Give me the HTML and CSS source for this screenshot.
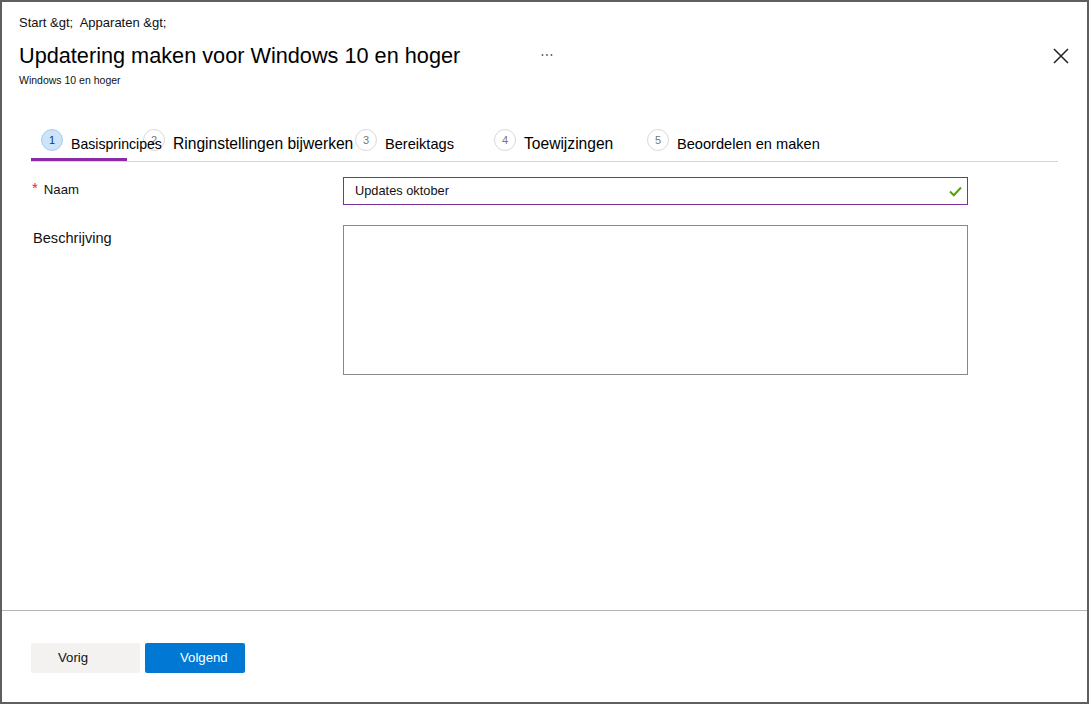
FILE: index.html
```html
<!DOCTYPE html>
<html lang="nl">
<head>
<meta charset="utf-8">
<title>Updatering maken voor Windows 10 en hoger</title>
<link rel="stylesheet" href="styles.css">
</head>
<body>
<div class="frame">
  <div class="content">
    <header class="header">
      <div class="breadcrumb">Start &amp;gt;&nbsp; Apparaten &amp;gt;</div>
      <div class="title-row">
        <h1 class="title">Updatering maken voor Windows 10 en hoger</h1>
        <svg class="more" width="12" height="4" viewBox="0 0 12 4" aria-label="Meer"><circle cx="1.5" cy="2" r="0.9" fill="#555"/><circle cx="6" cy="2" r="0.9" fill="#555"/><circle cx="10.5" cy="2" r="0.9" fill="#555"/></svg>
        <div class="spacer"></div>
        <svg class="close" width="16" height="16" viewBox="0 0 16 16" aria-label="Sluiten"><path d="M1 1 L15 15 M15 1 L1 15" stroke="#222" stroke-width="1.5" fill="none"/></svg>
      </div>
      <div class="subtitle">Windows 10 en hoger</div>
    </header>

    <nav class="tabs">
      <div class="tab tab-1 active"><span class="num">1</span><span class="label l-sm">Basisprincipes</span></div>
      <div class="tab tab-2"><span class="num">2</span><span class="label l-lg">Ringinstellingen bijwerken</span></div>
      <div class="tab tab-3"><span class="num">3</span><span class="label l-md">Bereiktags</span></div>
      <div class="tab tab-4"><span class="num">4</span><span class="label l-lg">Toewijzingen</span></div>
      <div class="tab tab-5"><span class="num">5</span><span class="label l-md">Beoordelen en maken</span></div>
    </nav>

    <form class="form">
      <div class="row">
        <label class="field-label"><span class="req">*</span>Naam</label>
        <div class="input">
          <span class="input-text">Updates oktober</span>
          <svg class="check" width="13" height="11" viewBox="0 0 13 11"><path d="M1 5.5 L4.8 9.3 L12 1.5" stroke="#57a300" stroke-width="2" fill="none"/></svg>
        </div>
      </div>
      <div class="row">
        <label class="field-label desc-label">Beschrijving</label>
        <div class="textarea"></div>
      </div>
    </form>
  </div>

  <footer class="footer">
    <button class="btn btn-prev" type="button">Vorig</button>
    <button class="btn btn-next" type="button">Volgend</button>
  </footer>
</div>
</body>
</html>
```
FILE: styles.css
```css
html, body {
  margin: 0;
  padding: 0;
  background: #ffffff;
}

body {
  font-family: "Liberation Sans", Arial, sans-serif;
  color: #000;
}

.frame {
  width: 1089px;
  height: 704px;
  box-sizing: border-box;
  border: 2px solid #5f5f5f;
  display: flex;
  flex-direction: column;
  background: #fff;
}

.content {
  flex: 1;
}

.header {
  padding: 13px 18px 0 17px;
}

.breadcrumb {
  font-size: 13px;
  line-height: 16px;
  color: #111;
}

.title-row {
  display: flex;
  align-items: center;
  margin-top: 11px;
  height: 28px;
}

.title {
  margin: 0;
  flex: 0 0 522px;
  font-size: 21.7px;
  line-height: 28px;
  font-weight: normal;
  color: #000;
  white-space: nowrap;
}

.more {
  display: block;
  margin-top: -2px;
}

.spacer {
  flex: 1;
}

.close {
  display: block;
  margin-top: -1px;
}

.subtitle {
  margin-top: 3px;
  font-size: 10.5px;
  line-height: 14px;
  color: #111;
}

.tabs {
  position: relative;
  display: flex;
  align-items: flex-start;
  margin: 34px 29px 0 29px;
  padding: 8px 0 10px 10px;
  border-bottom: 1px solid #d6d6d6;
}

.tabs::after {
  content: "";
  position: absolute;
  left: 0;
  bottom: 0;
  width: 96px;
  height: 3px;
  background: #8a2ba6;
}

.tab {
  display: flex;
  align-items: flex-start;
  gap: 8px;
  white-space: nowrap;
  height: 22px;
  min-width: 0;
  overflow: visible;
}

.tab-1 { flex: 0 0 102px; width: 102px; }
.tab-2 { flex: 0 0 212px; width: 212px; }
.tab-3 { flex: 0 0 139px; width: 139px; }
.tab-4 { flex: 0 0 153px; width: 153px; }
.tab-5 { flex: 0 0 auto; }

.num {
  flex: 0 0 auto;
  box-sizing: border-box;
  width: 22px;
  height: 22px;
  border-radius: 50%;
  border: 1px solid #dadada;
  background: #fff;
  color: #777;
  font-size: 11px;
  line-height: 20px;
  text-align: center;
}

.tab.active .num {
  background: #cde3f8;
  border-color: #a9cdef;
  color: #0b3d6e;
}

.label {
  flex: 0 0 auto;
  margin-top: 6px;
  line-height: 18px;
  color: #000;
  position: relative;
}

.l-sm { font-size: 14.1px; }
.l-md { font-size: 14.6px; }
.l-lg { font-size: 15.6px; }

.tab-1 .label { z-index: 1; }

.form {
  margin: 15px 0 0 29px;
  display: flex;
  flex-direction: column;
  gap: 20px;
}

.row {
  display: flex;
  align-items: flex-start;
}

.field-label {
  box-sizing: border-box;
  flex: 0 0 312px;
  width: 312px;
  padding-top: 4px;
  font-size: 13.2px;
  line-height: 18px;
  color: #111;
  display: flex;
  align-items: flex-start;
}

.req {
  color: #e0243a;
  font-size: 15px;
  line-height: 14px;
  margin-right: 6px;
  margin-left: 1px;
}

.desc-label {
  font-size: 14.6px;
  padding-top: 4px;
  padding-left: 2px;
}

.input {
  box-sizing: border-box;
  width: 625px;
  height: 28px;
  border: 1px solid #7a2f99;
  display: flex;
  align-items: center;
  padding: 0 5px 0 11px;
}

.input-text {
  flex: 1;
  font-size: 12.8px;
  line-height: 26px;
  color: #111;
}

.check {
  display: block;
}

.textarea {
  box-sizing: border-box;
  width: 625px;
  height: 150px;
  border: 1px solid #8a8886;
}

.footer {
  flex: 0 0 92px;
  box-sizing: border-box;
  border-top: 1px solid #b3b3b3;
  padding: 32px 0 0 29px;
  display: flex;
  align-items: flex-start;
  gap: 5px;
}

.btn {
  height: 30px;
  border: none;
  border-radius: 2px;
  font-family: "Liberation Sans", Arial, sans-serif;
  font-size: 13.2px;
  line-height: 30px;
  text-align: left;
  margin: 0;
  cursor: pointer;
}

.btn-prev {
  width: 109px;
  padding: 0 0 0 27px;
  background: #f3f2f1;
  color: #111;
}

.btn-next {
  width: 100px;
  padding: 0 0 0 35px;
  background: #0078d4;
  color: #fff;
}
```
